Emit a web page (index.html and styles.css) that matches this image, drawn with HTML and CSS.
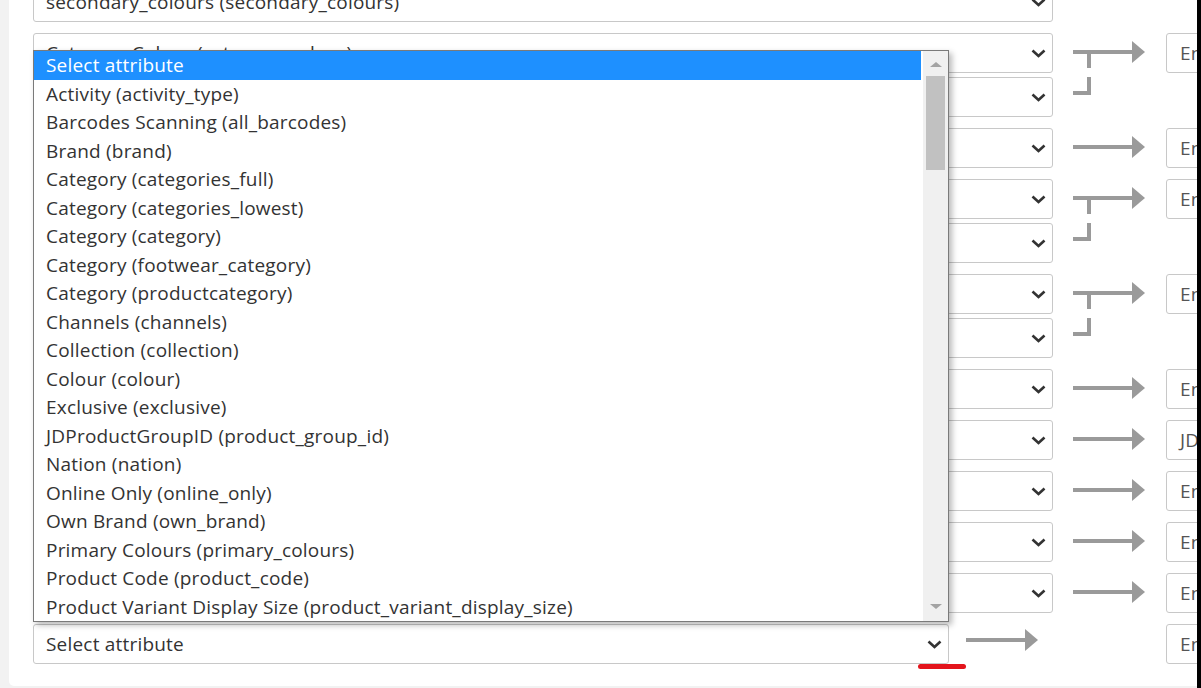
FILE: index.html
```html
<!DOCTYPE html>
<html>
<head>
<meta charset="utf-8">
<link rel="stylesheet" href="styles.css">
</head>
<body>
<div class="screen">
  <div class="main">
    <div class="card">
      <div class="rows">
        <div class="row">
          <div class="stack">
            <div class="sel"><span>primary_colours (primary_colours)</span><svg class="chev" width="15" height="9" viewBox="0 0 15 9"><polyline points="1.5,1.5 7.5,7 13.5,1.5"/></svg></div>
            <div class="sel"><span>secondary_colours (secondary_colours)</span><svg class="chev" width="15" height="9" viewBox="0 0 15 9"><polyline points="1.5,1.5 7.5,7 13.5,1.5"/></svg></div>
          </div>
          <div class="conn"><svg class="arrow" width="72" height="84" viewBox="0 0 72 84"><rect x="0" y="17" width="60" height="4"/><polygon points="59,8 72,19 59,30"/><rect x="14" y="19" width="4" height="16"/><rect x="14" y="44" width="4" height="18"/><rect x="0" y="58" width="18" height="4"/></svg></div>
          <div class="input">Enter value</div>
        </div>

        <div class="row">
          <div class="stack">
            <div class="sel"><span>Category Colour (category_colour)</span><svg class="chev" width="15" height="9" viewBox="0 0 15 9"><polyline points="1.5,1.5 7.5,7 13.5,1.5"/></svg></div>
            <div class="sel"><span>Colour (colour)</span><svg class="chev" width="15" height="9" viewBox="0 0 15 9"><polyline points="1.5,1.5 7.5,7 13.5,1.5"/></svg></div>
          </div>
          <div class="conn"><svg class="arrow" width="72" height="84" viewBox="0 0 72 84"><rect x="0" y="17" width="60" height="4"/><polygon points="59,8 72,19 59,30"/><rect x="14" y="19" width="4" height="16"/><rect x="14" y="44" width="4" height="18"/><rect x="0" y="58" width="18" height="4"/></svg></div>
          <div class="input">Enter value</div>
        </div>

        <div class="row">
          <div class="stack">
            <div class="sel"><span>Brand (brand)</span><svg class="chev" width="15" height="9" viewBox="0 0 15 9"><polyline points="1.5,1.5 7.5,7 13.5,1.5"/></svg></div>
          </div>
          <div class="conn"><svg class="arrow" width="72" height="40" viewBox="0 0 72 40"><rect x="0" y="17" width="60" height="4"/><polygon points="59,8 72,19 59,30"/></svg></div>
          <div class="input">Enter value</div>
        </div>

        <div class="row">
          <div class="stack">
            <div class="sel"><span>Category (categories_full)</span><svg class="chev" width="15" height="9" viewBox="0 0 15 9"><polyline points="1.5,1.5 7.5,7 13.5,1.5"/></svg></div>
            <div class="sel"><span>Category (categories_lowest)</span><svg class="chev" width="15" height="9" viewBox="0 0 15 9"><polyline points="1.5,1.5 7.5,7 13.5,1.5"/></svg></div>
          </div>
          <div class="conn"><svg class="arrow" width="72" height="84" viewBox="0 0 72 84"><rect x="0" y="17" width="60" height="4"/><polygon points="59,8 72,19 59,30"/><rect x="14" y="19" width="4" height="16"/><rect x="14" y="44" width="4" height="18"/><rect x="0" y="58" width="18" height="4"/></svg></div>
          <div class="input">Enter value</div>
        </div>

        <div class="row">
          <div class="stack">
            <div class="sel"><span>Category (footwear_category)</span><svg class="chev" width="15" height="9" viewBox="0 0 15 9"><polyline points="1.5,1.5 7.5,7 13.5,1.5"/></svg></div>
            <div class="sel"><span>Category (productcategory)</span><svg class="chev" width="15" height="9" viewBox="0 0 15 9"><polyline points="1.5,1.5 7.5,7 13.5,1.5"/></svg></div>
          </div>
          <div class="conn"><svg class="arrow" width="72" height="84" viewBox="0 0 72 84"><rect x="0" y="17" width="60" height="4"/><polygon points="59,8 72,19 59,30"/><rect x="14" y="19" width="4" height="16"/><rect x="14" y="44" width="4" height="18"/><rect x="0" y="58" width="18" height="4"/></svg></div>
          <div class="input">Enter value</div>
        </div>

        <div class="row">
          <div class="stack">
            <div class="sel"><span>Exclusive (exclusive)</span><svg class="chev" width="15" height="9" viewBox="0 0 15 9"><polyline points="1.5,1.5 7.5,7 13.5,1.5"/></svg></div>
          </div>
          <div class="conn"><svg class="arrow" width="72" height="40" viewBox="0 0 72 40"><rect x="0" y="17" width="60" height="4"/><polygon points="59,8 72,19 59,30"/></svg></div>
          <div class="input">Enter value</div>
        </div>

        <div class="row">
          <div class="stack">
            <div class="sel"><span>JDProductGroupID (product_group_id)</span><svg class="chev" width="15" height="9" viewBox="0 0 15 9"><polyline points="1.5,1.5 7.5,7 13.5,1.5"/></svg></div>
          </div>
          <div class="conn"><svg class="arrow" width="72" height="40" viewBox="0 0 72 40"><rect x="0" y="17" width="60" height="4"/><polygon points="59,8 72,19 59,30"/></svg></div>
          <div class="input">JDProductGroupID</div>
        </div>

        <div class="row">
          <div class="stack">
            <div class="sel"><span>Online Only (online_only)</span><svg class="chev" width="15" height="9" viewBox="0 0 15 9"><polyline points="1.5,1.5 7.5,7 13.5,1.5"/></svg></div>
          </div>
          <div class="conn"><svg class="arrow" width="72" height="40" viewBox="0 0 72 40"><rect x="0" y="17" width="60" height="4"/><polygon points="59,8 72,19 59,30"/></svg></div>
          <div class="input">Enter value</div>
        </div>

        <div class="row">
          <div class="stack">
            <div class="sel"><span>Own Brand (own_brand)</span><svg class="chev" width="15" height="9" viewBox="0 0 15 9"><polyline points="1.5,1.5 7.5,7 13.5,1.5"/></svg></div>
          </div>
          <div class="conn"><svg class="arrow" width="72" height="40" viewBox="0 0 72 40"><rect x="0" y="17" width="60" height="4"/><polygon points="59,8 72,19 59,30"/></svg></div>
          <div class="input">Enter value</div>
        </div>

        <div class="row">
          <div class="stack">
            <div class="sel"><span>Product Code (product_code)</span><svg class="chev" width="15" height="9" viewBox="0 0 15 9"><polyline points="1.5,1.5 7.5,7 13.5,1.5"/></svg></div>
          </div>
          <div class="conn"><svg class="arrow" width="72" height="40" viewBox="0 0 72 40"><rect x="0" y="17" width="60" height="4"/><polygon points="59,8 72,19 59,30"/></svg></div>
          <div class="input">Enter value</div>
        </div>

        <div class="row">
          <div class="lastcol">
            <div class="sel narrow"><span>Select attribute</span><svg class="chev" width="15" height="9" viewBox="0 0 15 9"><polyline points="1.5,1.5 7.5,7 13.5,1.5"/></svg></div>
            <svg class="arrow" width="72" height="40" viewBox="0 0 72 40"><rect x="0" y="14" width="60" height="4"/><polygon points="59,5 72,16 59,27"/></svg>
            <div class="mark"></div>
          </div>
          <div class="conn"></div>
          <div class="input">Enter value</div>
        </div>
      </div>
    </div>
  </div>
  <div class="edge"></div>

  <div class="dropdown">
    <div class="opts">
      <div class="opt hl">Select attribute</div>
      <div class="opt">Activity (activity_type)</div>
      <div class="opt">Barcodes Scanning (all_barcodes)</div>
      <div class="opt">Brand (brand)</div>
      <div class="opt">Category (categories_full)</div>
      <div class="opt">Category (categories_lowest)</div>
      <div class="opt">Category (category)</div>
      <div class="opt">Category (footwear_category)</div>
      <div class="opt">Category (productcategory)</div>
      <div class="opt">Channels (channels)</div>
      <div class="opt">Collection (collection)</div>
      <div class="opt">Colour (colour)</div>
      <div class="opt">Exclusive (exclusive)</div>
      <div class="opt">JDProductGroupID (product_group_id)</div>
      <div class="opt">Nation (nation)</div>
      <div class="opt">Online Only (online_only)</div>
      <div class="opt">Own Brand (own_brand)</div>
      <div class="opt">Primary Colours (primary_colours)</div>
      <div class="opt">Product Code (product_code)</div>
      <div class="opt">Product Variant Display Size (product_variant_display_size)</div>
    </div>
    <div class="sb">
      <div class="tri up"></div>
      <div class="thumb"></div>
      <div class="spacer"></div>
      <div class="tri down"></div>
    </div>
  </div>
</div>
</body>
</html>
```

FILE: styles.css
```css
html, body {
  margin: 0;
  padding: 0;
  overflow: hidden;
}

body {
  font-family: "Open Sans", "Noto Sans", sans-serif;
  background: #f2f2f2;
  color: #333;
}

.screen {
  position: relative;
  display: flex;
  width: 1201px;
  height: 688px;
  overflow: hidden;
}

.main {
  flex: 1;
  min-width: 0;
  display: flex;
  padding-left: 9px;
  overflow: hidden;
}

.card {
  flex: 1;
  min-width: 0;
  height: 686px;
  background: #fff;
  border-radius: 0 0 0 5px;
  padding-left: 24px;
  overflow: hidden;
}

.edge {
  width: 4px;
  background: #000;
}

.rows {
  margin-top: -62px;
  display: flex;
  flex-direction: column;
  gap: 11px;
}

.row {
  display: grid;
  grid-template-columns: 1020px 113px 240px;
  align-items: start;
}

.stack {
  display: flex;
  flex-direction: column;
  gap: 4px;
}

.sel {
  height: 40px;
  box-sizing: border-box;
  border: 1px solid #c8c8c8;
  border-radius: 3px;
  display: flex;
  align-items: center;
  justify-content: space-between;
  padding: 0 6px 0 12px;
  font-size: 19px;
  letter-spacing: 0.2px;
  color: #333;
  white-space: nowrap;
  background: #fff;
}

.chev {
  flex: none;
  margin-top: 1px;
}

.chev polyline {
  fill: none;
  stroke: #333;
  stroke-width: 2.6;
}

.conn {
  padding-left: 20px;
  height: 40px;
}

.arrow {
  display: block;
  fill: #9a9a9a;
}

.input {
  height: 40px;
  box-sizing: border-box;
  border: 1px solid #c8c8c8;
  border-radius: 3px;
  padding-left: 13px;
  display: flex;
  align-items: center;
  font-size: 19px;
  letter-spacing: 0.2px;
  color: #555;
  white-space: nowrap;
  overflow: hidden;
}

.lastcol {
  position: relative;
  display: flex;
  align-items: flex-start;
  gap: 17px;
}

.sel.narrow {
  width: 916px;
}

.mark {
  position: absolute;
  left: 885px;
  top: 40px;
  width: 48px;
  height: 5px;
  border-radius: 3px;
  background: #e3141c;
}

.dropdown {
  position: absolute;
  left: 33px;
  top: 50px;
  width: 916px;
  height: 572px;
  box-sizing: border-box;
  border: 1px solid #7a7a7a;
  background: #fff;
  box-shadow: 3px 3px 6px rgba(0, 0, 0, 0.28);
  display: flex;
}

.opts {
  flex: 1;
  min-width: 0;
  margin-right: 2px;
}

.opt {
  height: 28.5px;
  line-height: 28.5px;
  padding-left: 12px;
  font-size: 19px;
  letter-spacing: 0.2px;
  color: #333;
  white-space: nowrap;
}

.opt.hl {
  background: #1e90ff;
  color: #fff;
}

.sb {
  width: 25px;
  background: #f0f0f0;
  display: flex;
  flex-direction: column;
  align-items: center;
  padding: 11px 0 12px;
  box-sizing: border-box;
}

.tri {
  width: 0;
  height: 0;
  border-left: 6px solid transparent;
  border-right: 6px solid transparent;
}

.tri.up {
  border-bottom: 5px solid #a3a3a3;
}

.tri.down {
  border-top: 5px solid #a3a3a3;
}

.thumb {
  margin-top: 9px;
  width: 19px;
  height: 94px;
  background: #c1c1c1;
}

.spacer {
  flex: 1;
}
```
